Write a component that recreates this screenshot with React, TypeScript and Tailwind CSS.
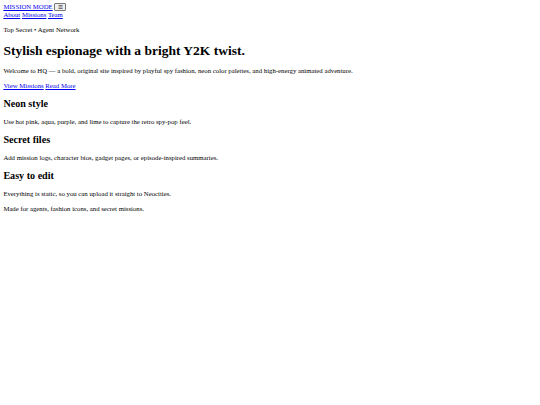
import React from 'react';

const features = [
  { title: 'Neon style', text: 'Use hot pink, aqua, purple, and lime to capture the retro spy-pop feel.' },
  { title: 'Secret files', text: 'Add mission logs, character bios, gadget pages, or episode-inspired summaries.' },
  { title: 'Easy to edit', text: 'Everything is static, so you can upload it straight to Neocities.' },
];

const linkClass = 'text-[#0000ee] underline';

const App: React.FC = () => {
  return (
    <div className="m-[3.375px] font-['Liberation_Serif',serif] text-[6.75px] leading-[1.15] text-black">
      <header>
        <div>
          <a href="#" className={linkClass}>
            MISSION MODE
          </a>{' '}
          <button
            type="button"
            className="rounded-[1px] border-[0.5px] border-[#767676] bg-[#efefef] px-[2.5px] py-0 font-['DejaVu_Sans',sans-serif] text-[5.625px] leading-[normal] text-black"
          >
            ☰
          </button>
        </div>
        <nav>
          <a href="#" className={linkClass}>About</a>{' '}
          <a href="#" className={linkClass}>Missions</a>{' '}
          <a href="#" className={linkClass}>Team</a>
        </nav>
      </header>

      <main>
        <p className="my-[6.75px]">Top Secret • Agent Network</p>
        <h1 className="my-[9.045px] text-[13.5px] font-bold">Stylish espionage with a bright Y2K twist.</h1>
        <p className="my-[6.75px]">
          Welcome to HQ — a bold, original site inspired by playful spy fashion, neon color palettes, and high-energy animated adventure.
        </p>
        <p className="my-[6.75px]">
          <a href="#" className={linkClass}>View Missions</a>{' '}
          <a href="#" className={linkClass}>Read More</a>
        </p>

        {features.map((f) => (
          <section key={f.title}>
            <h2 className="my-[8.4px] text-[10.125px] font-bold">{f.title}</h2>
            <p className="my-[6.75px]">{f.text}</p>
          </section>
        ))}
      </main>

      <footer>
        <p className="my-[6.75px]">Made for agents, fashion icons, and secret missions.</p>
      </footer>
    </div>
  );
};

export default App;
